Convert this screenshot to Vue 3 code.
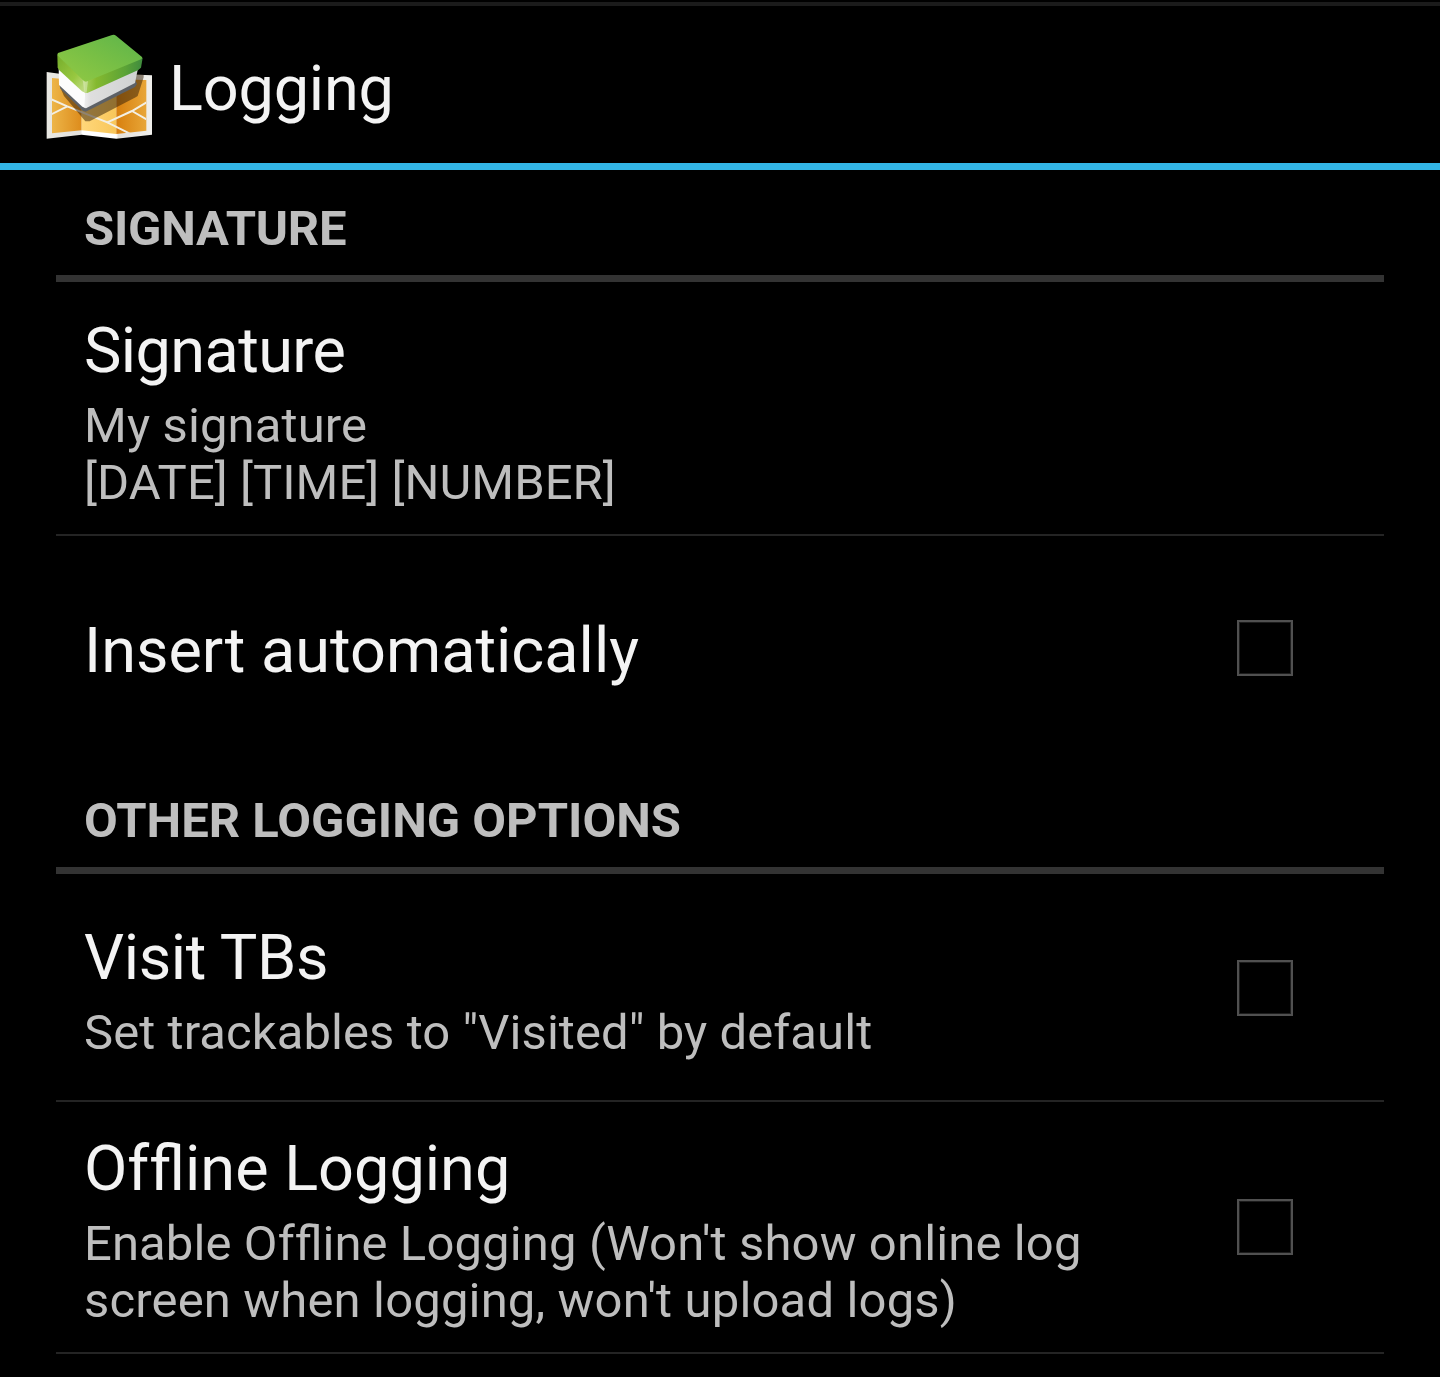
<script setup>
// Each text is a list of [string, tracking] runs, tracking in pixels.
const sections = [
  {
    title: [['SIGNATURE', -0.25]],
    items: [
      {
        name: [['Signature', -0.6]],
        lines: [[['My signature', 0.12]], [['[DATE] [TIME] [NUMBER]', 0.03]]],
        size: 'tall',
      },
      { name: [['Insert automatically', 0]], lines: [], checkbox: true, size: 'single' },
    ],
  },
  {
    title: [['OTHER LOGGING OPTIONS', 0]],
    items: [
      {
        name: [['Visit TBs', -0.4]],
        lines: [[['Set trackables to "Visited" by default', 0.07]]],
        checkbox: true,
        size: 'medium',
      },
      {
        name: [['Of', 0], ['fline Logging', 0]],
        lines: [
          [['Enable Of', 0.1], ['fline', 0], [' Logging (Won\'t show online log', 0.13]],
          [['screen when logging, won\'t upload logs)', 0.15]],
        ],
        checkbox: true,
        size: 'wide',
      },
    ],
  },
]
const tracking = (value) => (value ? { letterSpacing: `${value}px` } : null)
</script>

<template>
  <div class="screen">
    <header class="bar">
      <svg class="logo" viewBox="0 0 390 378" width="130" height="126">
        <defs>
          <linearGradient id="top" x1="0" y1="1" x2="1" y2="0">
            <stop offset="0" stop-color="#94ca43" />
            <stop offset=".5" stop-color="#78bf45" />
            <stop offset="1" stop-color="#5cb44b" />
          </linearGradient>
          <linearGradient id="rimLeft" x1="0" y1="0" x2="1" y2="1">
            <stop offset="0" stop-color="#75ad2b" />
            <stop offset=".6" stop-color="#98c840" />
            <stop offset="1" stop-color="#c8df92" />
          </linearGradient>
          <linearGradient id="rimRight" x1="0" y1="0" x2="1" y2="0">
            <stop offset="0" stop-color="#a9d05f" />
            <stop offset=".2" stop-color="#85b92f" />
            <stop offset=".7" stop-color="#5ba336" />
            <stop offset="1" stop-color="#3f8b3e" />
          </linearGradient>
          <linearGradient id="mapLeft">
            <stop offset="0" stop-color="#edb548" />
            <stop offset="1" stop-color="#dd8c1c" />
          </linearGradient>
          <linearGradient id="mapMid">
            <stop offset="0" stop-color="#ffd77a" />
            <stop offset="1" stop-color="#f8c65a" />
          </linearGradient>
          <linearGradient id="mapRight">
            <stop offset="0" stop-color="#d8800f" />
            <stop offset="1" stop-color="#e8a637" />
          </linearGradient>
          <linearGradient id="paper">
            <stop offset="0" stop-color="#e9e8e3" />
            <stop offset=".32" stop-color="#e3e1dc" />
            <stop offset=".34" stop-color="#fff" />
            <stop offset=".66" stop-color="#fff" />
            <stop offset=".68" stop-color="#e3e1dc" />
            <stop offset="1" stop-color="#f0efeb" />
          </linearGradient>
          <linearGradient id="side">
            <stop offset="0" stop-color="#eee" />
            <stop offset=".12" stop-color="#dedede" />
            <stop offset="1" stop-color="#d0d2d2" />
          </linearGradient>
          <clipPath id="mapArea">
            <path d="M48 162L137 168L241 166L331 168V320L241 331L137 319L48 328Z" />
          </clipPath>
        </defs>
        <path d="M32 144L137 158L241 150L348 154V332L241 344L137 332L32 344Z" fill="url(#paper)" />
        <path d="M48 162L137 170V319L48 328Z" fill="url(#mapLeft)" />
        <path d="M137 168H241V330L137 319Z" fill="url(#mapMid)" />
        <path d="M241 166L331 168V320L241 330Z" fill="url(#mapRight)" />
        <g clip-path="url(#mapArea)" fill="none" stroke="#f3efe3" stroke-width="6">
          <path d="M46 226L94 247L214 295L292 334" />
          <path d="M46 271L94 247M214 295L288 261L333 234M288 261L333 287" />
        </g>
        <path d="M76 198L84 216L148 292H161L299 220L305 216L323 160V152L300 150L180 200Z" fill="#33200a" fill-opacity=".52" />
        <path d="M69 175L147 244L298 169L303 180L297 189L149 263L140 260L73 194Z" fill="#5d6166" />
        <path d="M68 128L149 200V253L139 248L69 183Z" fill="#fcfcfc" />
        <path d="M148 200L307 128L297 177L150 253L145 250Z" fill="url(#side)" />
        <path d="M64 92L149 172V207L138 202L69 138L65 130Z" fill="url(#rimLeft)" />
        <path d="M148 168L320 101L315 131L307 138L154 207L146 205Z" fill="url(#rimRight)" />
        <path d="M66 87L226 34Q234 30 241 36L318 99Q321 103 315 106L154 172Q148 175 143 170L66 96Q62 91 66 87Z" fill="url(#top)" />
        <path d="M140 168Q148 177 156 171L152 204Q148 206 145 203Z" fill="#d9e9b5" fill-opacity=".6" />
      </svg>
      <h1>Logging</h1>
    </header>
    <main>
      <section v-for="(section, s) in sections" :key="s">
        <h2><span v-for="[text, space] in section.title" :key="text" :style="tracking(space)">{{ text }}</span></h2>
        <div v-for="(item, i) in section.items" :key="i" class="row" :class="item.size">
          <div class="copy">
            <h3><span v-for="[text, space] in item.name" :key="text" class="run" :style="tracking(space)">{{ text }}</span></h3>
            <p v-for="(line, l) in item.lines" :key="l"><span v-for="[text, space] in line" :key="text" class="run" :style="tracking(space)">{{ text }}</span></p>
          </div>
          <span v-if="item.checkbox" class="box" role="checkbox" aria-checked="false"></span>
        </div>
      </section>
    </main>
  </div>
</template>

<style>
body {
  margin: 0;
  background: #000;
}
</style>

<style scoped>
.screen {
  display: flow-root;
  width: 1440px;
  height: 1377px;
  overflow: hidden;
  background: #000;
  color: #f3f3f3;
  font-family: Roboto, sans-serif;
}
h1, h2, h3, p {
  margin: 0;
  font-weight: 400;
  white-space: pre;
}
.run {
  display: inline-block;
}
.bar {
  box-sizing: border-box;
  height: 168px;
  margin-top: 2px;
  border-top: 4px solid #1b1b1b;
  border-bottom: 7px solid #33b5e5;
  display: flex;
  align-items: flex-start;
  padding: 18px 0 0 36px;
}
.logo {
  flex: none;
}
h1 {
  margin: 28px 0 0 3px;
  font-size: 63px;
  line-height: 74px;
  letter-spacing: -0.2px;
}
main {
  padding: 0 56px;
}
h2 {
  box-sizing: border-box;
  height: 112px;
  padding: 30px 28px 0;
  border-bottom: 7px solid #333;
  color: #bebebe;
  font-size: 49px;
  font-weight: 700;
  line-height: 57px;
}
.row {
  box-sizing: border-box;
  display: flex;
  align-items: center;
  justify-content: space-between;
  padding: 0 91px 0 28px;
  border-bottom: 2px solid #242424;
}
.tall {
  height: 254px;
  padding-top: 2px;
}
.single {
  height: 226px;
  border-bottom-color: transparent;
}
.medium {
  height: 228px;
}
.wide {
  height: 252px;
}
.copy {
  padding-top: 7px;
}
.single .copy {
  padding-top: 6px;
}
h3 {
  font-size: 63px;
  line-height: 74px;
}
p {
  color: #bebebe;
  font-size: 49px;
  line-height: 57px;
}
h3 + p {
  margin-top: 9px;
}
.box {
  box-sizing: border-box;
  flex: none;
  width: 56px;
  height: 56px;
  border: 2px solid #505050;
  box-shadow: inset 0 0 0 1px #1c1c1c;
}
.medium .box {
  margin-top: 2px;
}
</style>
